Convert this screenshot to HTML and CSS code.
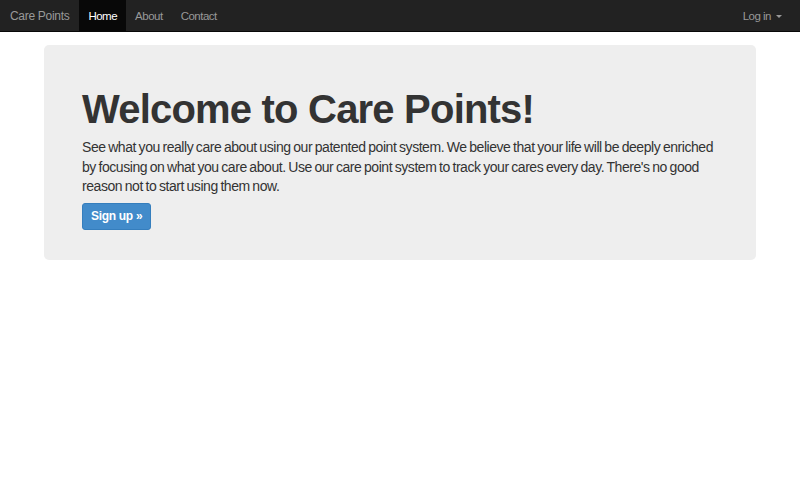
FILE: index.html
```html
<!DOCTYPE html>
<html>
<head>
<meta charset="utf-8">
<link rel="stylesheet" href="styles.css">
</head>
<body>
<nav class="navbar">
  <div class="nav-left">
    <a class="brand">Care Points</a>
    <a class="nav-item active">Home</a>
    <a class="nav-item">About</a>
    <a class="nav-item">Contact</a>
  </div>
  <a class="nav-item login">Log in <span class="caret"></span></a>
</nav>
<main class="container">
  <section class="jumbotron">
    <h1 class="title">Welcome to Care Points!</h1>
    <p class="lead">See what you really care about using our patented point system. We believe that your life will be deeply enriched by focusing on what you care about. Use our care point system to track your cares every day. There's no good reason not to start using them now.</p>
    <a class="btn">Sign up &raquo;</a>
  </section>
</main>
</body>
</html>
```
FILE: styles.css
```css
html, body {
  margin: 0;
  padding: 0;
  background: #fff;
  font-family: "Liberation Sans", Arial, sans-serif;
  color: #333;
}
.navbar {
  height: 31px;
  background: #222;
  border-bottom: 1px solid #080808;
  display: flex;
  justify-content: space-between;
  align-items: stretch;
  font-size: 11.5px;
  letter-spacing: -0.5px;
}
.nav-left {
  display: flex;
  align-items: stretch;
}
.brand {
  color: #999;
  font-size: 12px;
  letter-spacing: -0.3px;
  padding: 0 10px 0 10px;
  display: flex;
  align-items: center;
}
.nav-item {
  color: #999;
  padding: 0 9px;
  display: flex;
  align-items: center;
}
.nav-item.active {
  background: #080808;
  color: #fff;
}
.login {
  padding-right: 18px;
}
.caret {
  display: inline-block;
  width: 0;
  height: 0;
  margin-left: 5px;
  margin-top: 1px;
  border-top: 3px solid #999;
  border-left: 3px solid transparent;
  border-right: 3px solid transparent;
}
.container {
  width: 712px;
  margin: 13px auto 0;
}
.jumbotron {
  background: #eee;
  border-radius: 5px;
  padding: 42px 38px 30px;
}
.title {
  margin: 0 0 7px;
  font-size: 40px;
  font-weight: bold;
  letter-spacing: -0.8px;
  line-height: 44px;
}
.lead {
  margin: 0 0 6.5px;
  font-size: 14px;
  letter-spacing: -0.45px;
  word-spacing: -0.8px;
  line-height: 19.5px;
}
.btn {
  display: inline-block;
  background: #428bca;
  border: 1px solid #357ebd;
  border-radius: 3px;
  color: #fff;
  font-size: 12px;
  font-weight: bold;
  letter-spacing: -0.3px;
  padding: 6px 8px;
  line-height: 13px;
}
```
